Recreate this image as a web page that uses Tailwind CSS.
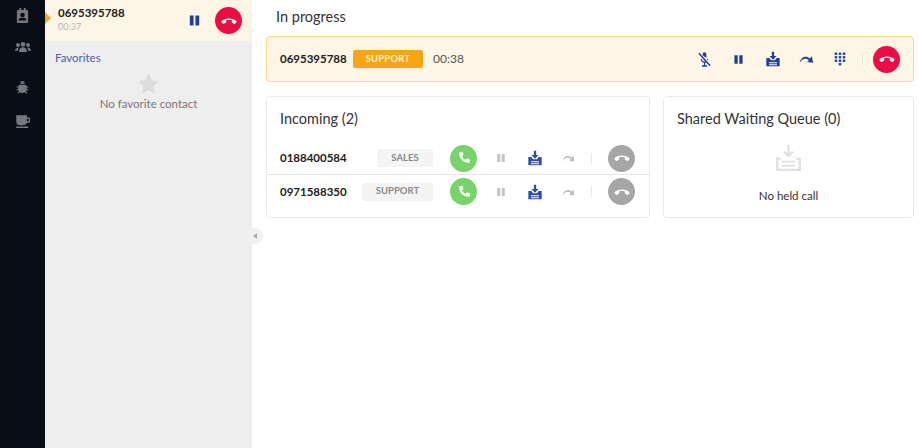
<!DOCTYPE html>
<html lang="en">
  <head>
    <meta charset="UTF-8" />
    <title>Softphone</title>
    <script src="https://cdn.jsdelivr.net/npm/@tailwindcss/browser@4"></script>
  </head>
  <body class="w-[919px] h-[448px] overflow-hidden bg-white font-['Lato',sans-serif] text-[#2b2b2b]">
    <!-- icons -->
    <svg class="hidden">
      <symbol id="hangup" viewBox="0 0 24 24"><path fill="currentColor" d="M12 8.600c-3.900 0-7.500 1.300-9.700 3.500-.5.5-.5 1.100-.1 1.600l1.700 1.900c.4.400 1 .5 1.500.2l2.400-1.400c.4-.2.600-.7.500-1.200l-.4-1.800c1.300-.5 2.700-.7 4.100-.7s2.800.2 4.100.7l-.4 1.800c-.1.500.1 1 .5 1.200l2.400 1.400c.5.300 1.100.2 1.500-.2l1.700-1.900c.4-.5.400-1.100-.1-1.600C19.500 9.900 15.900 8.600 12 8.600z"/></symbol>
      <symbol id="phone" viewBox="0 0 24 24"><path fill="currentColor" d="M5.500 3.200 8.300 2.500c.5-.1 1 .2 1.200.6l1.500 3.400c.2.500.1 1-.3 1.300L9 9.300c1 2.400 3 4.400 5.400 5.500l1.500-1.700c.3-.4.900-.5 1.300-.3l3.400 1.500c.5.200.7.700.6 1.200l-.7 2.800c-.1.500-.5.900-1 .9C10.900 19.200 4.600 13 4.600 4.200c0-.5.400-.9.900-1z"/></symbol>
      <symbol id="pause" viewBox="0 0 24 24"><path fill="currentColor" d="M4.500 4h6v16h-6zM13.500 4h6v16h-6z"/></symbol>
      <symbol id="hold" viewBox="0 0 24 24"><path fill="currentColor" d="M10.300 1h3.400v6.500h3.600L12 13 6.700 7.500h3.600z"/><path fill="currentColor" d="M2 10.500h4.500L9 14h6l2.500-3.500H22V23H2zM6 17v1.500h12V17zM6 20v1.200h12V20z" fill-rule="evenodd"/></symbol>
      <symbol id="forward" viewBox="0 0 24 24"><path fill="currentColor" d="M1 17C2.500 11.500 6 8.500 10 8.500c2.400 0 4.400 1 6.200 2.600L19.500 8l1.500 9.500-9-1 3-2.700c-1.500-1.400-3.200-2.300-5-2.300-3 0-6 1.600-8.500 5.500z"/></symbol>
      <symbol id="dialpad" viewBox="0 0 24 24"><g fill="currentColor"><rect x="3" y="1" width="4.200" height="4"/><rect x="9.900" y="1" width="4.200" height="4"/><rect x="16.800" y="1" width="4.200" height="4"/><rect x="3" y="7" width="4.200" height="4"/><rect x="9.900" y="7" width="4.200" height="4"/><rect x="16.800" y="7" width="4.200" height="4"/><rect x="3" y="13" width="4.200" height="4"/><rect x="9.900" y="13" width="4.200" height="4"/><rect x="16.800" y="13" width="4.200" height="4"/><rect x="9.900" y="19" width="4.200" height="4"/></g></symbol>
    </svg>

    <div class="flex h-full">
      <!-- Sidebar -->
      <nav class="w-[45px] shrink-0 bg-[#080d16] flex flex-col items-center pt-[8px] text-[#75787d]">
        <svg class="w-[15px] h-[15px]" viewBox="0 0 24 24"><path fill="currentColor" fill-rule="evenodd" d="M5 3h2V0h3v3h4V0h3v3h2a2 2 0 0 1 2 2v17a2 2 0 0 1-2 2H5a2 2 0 0 1-2-2V5a2 2 0 0 1 2-2zm7 4.500a3.500 3.500 0 1 0 0 7 3.500 3.500 0 0 0 0-7zM6 20h12v-2c0-1.500-3-2.500-6-2.500S6 16.500 6 18z"/></svg>
        <svg class="w-[16px] h-[16px] mt-[15px]" viewBox="0 0 24 24"><path fill="currentColor" d="M12 6a3.500 3.500 0 1 1 0 7 3.500 3.500 0 0 1 0-7zM4.500 7.500a3 3 0 1 1 0 6 3 3 0 0 1 0-6zM19.500 7.500a3 3 0 1 1 0 6 3 3 0 0 1 0-6zM6 21c0-4 2.500-7 6-7s6 3 6 7zM0 19c0-2.500 1.500-4.500 4.500-4.500.6 0 1 .1 1.500.3C4.800 16 4.300 17.500 4.200 19zM24 19h-4.200c-.1-1.500-.6-3-1.800-4.200.5-.2.900-.3 1.500-.3 3 0 4.500 2 4.500 4.500z"/></svg>
        <svg class="w-[13px] h-[13px] mt-[27px]" viewBox="0 0 24 24"><path fill="currentColor" d="M8 4a4 4 0 0 1 8 0v1H8zM6 7h12c1 1 1.500 2 1.700 3H23v2h-3v3h3v2h-3.300c-.3 1-.7 1.900-1.400 2.600L21 22l-1.500 1.500-2.800-2.700c-1.200.8-2.800 1.200-4.700 1.200s-3.500-.4-4.700-1.200L4.500 23.500 3 22l2.700-2.400C5 18.900 4.600 18 4.300 17H1v-2h3v-3H1v-2h3.300C4.500 9 5 8 6 7z"/></svg>
        <svg class="w-[15px] h-[15px] mt-[20px]" viewBox="0 0 24 24"><path fill="currentColor" fill-rule="evenodd" d="M2 2h17v3h1a3.500 3.500 0 0 1 0 9.500h-1.200A6 6 0 0 1 13 18H8a6 6 0 0 1-6-6zm17 5.500v4.500h1a2.200 2.200 0 0 0 0-4.500zM2 20h19v2.500H2z"/></svg>
      </nav>

      <!-- Left panel -->
      <aside class="w-[207px] shrink-0 bg-[#eeeeee] relative">
        <div class="h-[41px] bg-[#fdf5e6] flex items-center pl-[13px] pr-[10px] relative">
          <span class="absolute left-0 top-[12px] border-y-[6px] border-y-transparent border-l-[6px] border-l-[#f5a623]"></span>
          <div class="flex-1">
            <div class="text-[11.5px] leading-[15px] font-bold text-[#222] mt-[-3px]">0695395788</div>
            <div class="text-[9px] leading-[12px] text-[#b5b5b5] mt-[1px]">00:37</div>
          </div>
          <svg class="w-[15px] h-[15px] text-[#1f3f9a] mr-[13px]"><use href="#pause" /></svg>
          <span class="w-[27px] h-[27px] rounded-full bg-[#ee0c45] text-white flex items-center justify-center"><svg class="w-[18px] h-[18px]"><use href="#hangup" /></svg></span>
        </div>
        <div class="pl-[10px] pt-[10px] text-[11.5px] leading-[14px] text-[#4a5fa8]">Favorites</div>
        <div class="flex flex-col items-center mt-[7px]">
          <svg class="w-[23px] h-[23px] text-[#dcdcdc]" viewBox="0 0 24 24"><path fill="currentColor" d="M12 1l3.400 7.300 7.600 1-5.600 5.400 1.400 8L12 18.800 5.200 22.700l1.400-8L1 9.300l7.600-1z"/></svg>
          <span class="text-[11.5px] leading-[14px] text-[#777] mt-[2px]">No favorite contact</span>
        </div>
        <span class="absolute right-[-11px] top-[228px] w-[16px] h-[16px] rounded-full bg-[#f1f1f1] flex items-center justify-center z-10">
          <span class="border-y-[3px] border-y-transparent border-r-[4px] border-r-[#aaa]"></span>
        </span>
      </aside>

      <!-- Main -->
      <main class="flex-1 pl-[14px] pr-[5px]">
        <h2 class="text-[14.5px] leading-[18px] pl-[10px] pt-[8px] text-[#333]">In progress</h2>

        <section class="mt-[10px] w-[648px] h-[46px] rounded-[4px] border border-[#fbd892] bg-[#fdf5e6] flex items-center pl-[13px] pr-[13px]">
          <span class="text-[11.5px] font-bold text-[#222] w-[73px]">0695395788</span>
          <span class="w-[70px] h-[18px] bg-[#f5a611] rounded-[2px] text-[#fdf0d0] text-[9.5px] font-bold tracking-[0.2px] flex items-center justify-center">SUPPORT</span>
          <span class="text-[12px] text-[#555] ml-[10px] flex-1">00:38</span>
          <div class="flex items-center text-[#1f3f9a]">
            <svg class="w-[15px] h-[15px]" viewBox="0 0 24 24"><path fill="currentColor" d="M9 3.500a3 3 0 0 1 6 0v6L9 5zM6 11h2c0 2 1 4 4 4l1.500-.3 1.600 1.700c-.7.300-1.300.5-2.100.6V21h3v2.500H8V21h3v-4C8 16.500 6 14 6 11zM16 11h2c0 1-.2 1.800-.5 2.500L16 12z"/><path fill="none" stroke="currentColor" stroke-width="2.400" d="M3 2l18 20"/></svg>
            <svg class="w-[13px] h-[13px] ml-[20px]"><use href="#pause" /></svg>
            <svg class="w-[16px] h-[16px] ml-[20px]"><use href="#hold" /></svg>
            <svg class="w-[16px] h-[16px] ml-[18px]"><use href="#forward" /></svg>
            <svg class="w-[14px] h-[14px] ml-[18px]"><use href="#dialpad" /></svg>
            <span class="w-px h-[11px] bg-[#ece5d6] ml-[15px]"></span>
            <span class="w-[27px] h-[27px] rounded-full bg-[#ee0c45] text-white flex items-center justify-center ml-[10px]"><svg class="w-[18px] h-[18px]"><use href="#hangup" /></svg></span>
          </div>
        </section>

        <div class="flex gap-[13px] mt-[14px]">
          <!-- Incoming -->
          <section class="w-[384px] h-[122px] rounded-[4px] border border-[#eaeaea] pt-[13px]">
            <h3 class="text-[14.5px] leading-[18px] pl-[13px] text-[#333]">Incoming (2)</h3>
            <div class="mt-[14px] h-[33px] flex items-center pl-[13px] pr-[14px] border-b border-[#e6e6e6]">
              <span class="text-[11.5px] font-bold text-[#222] flex-1">0188400584</span>
              <span class="w-[56px] h-[18px] bg-[#f4f4f4] rounded-[2px] text-[#8a8a8a] text-[9.5px] font-bold flex items-center justify-center">SALES</span>
              <span class="w-[27px] h-[27px] rounded-full bg-[#77d468] text-white flex items-center justify-center ml-[17px]"><svg class="w-[16px] h-[16px]"><use href="#phone" /></svg></span>
              <svg class="w-[12px] h-[12px] text-[#c4c4c4] ml-[18px]"><use href="#pause" /></svg>
              <svg class="w-[16px] h-[16px] text-[#2c4ea3] ml-[20px]"><use href="#hold" /></svg>
              <svg class="w-[14px] h-[14px] text-[#bdbdbd] ml-[19px]"><use href="#forward" /></svg>
              <span class="w-px h-[11px] bg-[#e8e8e8] ml-[15px]"></span>
              <span class="w-[27px] h-[27px] rounded-full bg-[#a6a6a6] text-white flex items-center justify-center ml-[16px]"><svg class="w-[18px] h-[18px]"><use href="#hangup" /></svg></span>
            </div>
            <div class="h-[33px] flex items-center pl-[13px] pr-[14px]">
              <span class="text-[11.5px] font-bold text-[#222] flex-1">0971588350</span>
              <span class="w-[71px] h-[18px] bg-[#f4f4f4] rounded-[2px] text-[#8a8a8a] text-[9.5px] font-bold flex items-center justify-center">SUPPORT</span>
              <span class="w-[27px] h-[27px] rounded-full bg-[#77d468] text-white flex items-center justify-center ml-[17px]"><svg class="w-[16px] h-[16px]"><use href="#phone" /></svg></span>
              <svg class="w-[12px] h-[12px] text-[#c4c4c4] ml-[18px]"><use href="#pause" /></svg>
              <svg class="w-[16px] h-[16px] text-[#2c4ea3] ml-[20px]"><use href="#hold" /></svg>
              <svg class="w-[14px] h-[14px] text-[#bdbdbd] ml-[19px]"><use href="#forward" /></svg>
              <span class="w-px h-[11px] bg-[#e8e8e8] ml-[15px]"></span>
              <span class="w-[27px] h-[27px] rounded-full bg-[#a6a6a6] text-white flex items-center justify-center ml-[16px]"><svg class="w-[18px] h-[18px]"><use href="#hangup" /></svg></span>
            </div>
          </section>

          <!-- Queue -->
          <section class="w-[251px] h-[122px] rounded-[4px] border border-[#eaeaea] pt-[13px] flex flex-col">
            <h3 class="text-[14.5px] leading-[18px] pl-[13px] text-[#333]">Shared Waiting Queue (0)</h3>
            <div class="flex flex-col items-center mt-[17px]">
              <svg class="w-[27px] h-[27px] text-[#e0e0e0]" viewBox="0 0 24 24"><path fill="none" stroke="currentColor" stroke-width="2" d="M12 0v9M8 6l4 4 4-4"/><path fill="currentColor" fill-rule="evenodd" d="M1 11h4v2H3v8h18v-8h-2v-2h4v12H1z"/><path fill="currentColor" d="M6 14h12v1.600H6zM6 17.500h12v1.600H6z"/></svg>
              <span class="text-[11.5px] leading-[14px] text-[#333] mt-[17px]">No held call</span>
            </div>
          </section>
        </div>
      </main>
    </div>
  </body>
</html>
